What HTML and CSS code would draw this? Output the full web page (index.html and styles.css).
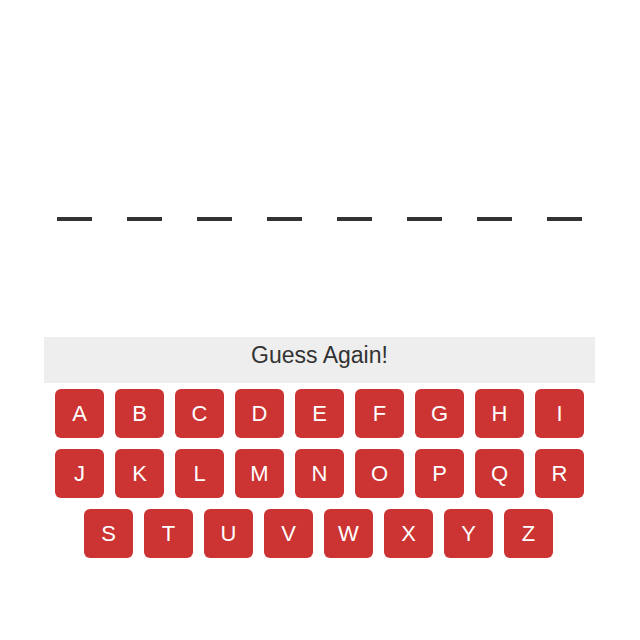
FILE: index.html
```html
<!DOCTYPE html>
<html>
<head>
<meta charset="utf-8">
<link rel="stylesheet" href="styles.css">
</head>
<body>
<div class="game">
  <div class="word">
    <span class="dash"></span><span class="dash"></span><span class="dash"></span><span class="dash"></span>
    <span class="dash"></span><span class="dash"></span><span class="dash"></span><span class="dash"></span>
  </div>
  <div class="status">Guess Again!</div>
  <div class="keyboard">
    <div class="row">
      <button class="key">A</button><button class="key">B</button><button class="key">C</button><button class="key">D</button><button class="key">E</button><button class="key">F</button><button class="key">G</button><button class="key">H</button><button class="key">I</button>
    </div>
    <div class="row">
      <button class="key">J</button><button class="key">K</button><button class="key">L</button><button class="key">M</button><button class="key">N</button><button class="key">O</button><button class="key">P</button><button class="key">Q</button><button class="key">R</button>
    </div>
    <div class="row row-last">
      <button class="key">S</button><button class="key">T</button><button class="key">U</button><button class="key">V</button><button class="key">W</button><button class="key">X</button><button class="key">Y</button><button class="key">Z</button>
    </div>
  </div>
</div>
</body>
</html>
```
FILE: styles.css
```css
html, body {
  margin: 0;
  padding: 0;
  background: #ffffff;
  font-family: "Liberation Sans", Arial, sans-serif;
}
.game {
  width: 551px;
  margin: 0 0 0 44px;
}
.word {
  display: flex;
  justify-content: center;
  gap: 35px;
  padding-top: 217px;
}
.dash {
  display: block;
  width: 35px;
  height: 4px;
  background: #333333;
}
.status {
  margin-top: 116px;
  height: 46px;
  line-height: 36px;
  background: #eeeeee;
  color: #333333;
  font-size: 23px;
  text-align: center;
}
.keyboard {
  display: flex;
  flex-direction: column;
  gap: 11px;
  margin-top: 6px;
}
.row {
  display: flex;
  justify-content: center;
  gap: 11px;
}
.row-last {
  padding-right: 2px;
}
.key {
  width: 49px;
  height: 49px;
  border: none;
  border-radius: 6px;
  background: #cc3333;
  color: #ffffff;
  font-family: "Liberation Sans", Arial, sans-serif;
  font-size: 22px;
  padding: 0;
  margin: 0;
}
```
